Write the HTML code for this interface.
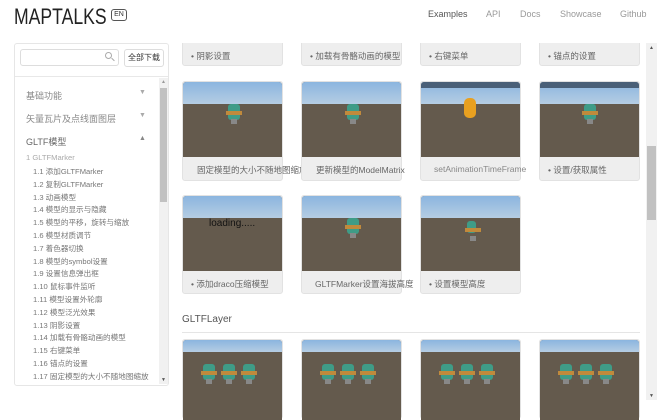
<!DOCTYPE html>
<html><head><meta charset="utf-8"><style>
*{margin:0;padding:0;box-sizing:border-box}
body{width:667px;height:413px;overflow:hidden;background:#fff;font-family:"Liberation Sans","Noto Sans CJK SC",sans-serif;position:relative;color:#555}
.a{position:absolute}
.logo{left:14px;top:4px;font-size:22px;color:#222;transform:scaleX(0.8);transform-origin:0 0}
.en{left:111px;top:9px;width:16px;height:12px;border:1px solid #555;border-radius:3px;font-size:7px;line-height:10px;text-align:center;color:#333}
.nav{top:9px;font-size:9px;color:#999}
.side{left:14px;top:43px;width:155px;height:343px;border:1px solid #e6e6e6;border-radius:3px}
.sec{left:26px;font-size:9px;color:#888}
.arr{left:139px;font-size:7px;color:#aaa}
.it{left:33px;font-size:7.6px;color:#777;white-space:nowrap}
.card{width:101px;background:#eee;border:1px solid #e2e2e2;border-radius:3px}
.img{position:absolute;left:0;top:0;width:100%;background:#645a4d;overflow:hidden;border-radius:3px 3px 0 0}
.sky{position:absolute;left:0;top:0;width:100%;height:22px;background:linear-gradient(#8bb5df,#b5cde3)}
.cap{position:absolute;left:0;font-size:8.5px;color:#666;white-space:nowrap}
.bot{position:absolute;width:12px;height:16px;background:#3f9c87;border-radius:3px}
.bot:after{content:"";position:absolute;left:-2px;top:7px;width:16px;height:4px;background:#c08a3c}
.bot:before{content:"";position:absolute;left:3px;top:15px;width:6px;height:5px;background:#888}
</style></head><body>
<div class="a logo">MAPTALKS</div>
<div class="a en">EN</div>
<div class="a nav" style="left:428px;color:#555">Examples</div>
<div class="a nav" style="left:486px">API</div>
<div class="a nav" style="left:520px">Docs</div>
<div class="a nav" style="left:560px">Showcase</div>
<div class="a nav" style="left:620px">Github</div>

<div class="a side"></div>
<div class="a" style="left:20px;top:49px;width:99px;height:17px;border:1px solid #ddd;border-radius:3px"></div>
<div class="a" style="left:105px;top:52px;width:7px;height:7px;border:1px solid #aaa;border-radius:50%"></div>
<div class="a" style="left:111px;top:59px;width:4px;height:1px;background:#aaa;transform:rotate(45deg)"></div>
<div class="a" style="left:124px;top:49px;width:40px;height:18px;border:1px solid #ddd;border-radius:3px;font-size:8px;line-height:16px;text-align:center;color:#333">全部下载</div>
<div class="a" style="left:15px;top:76px;width:153px;height:1px;background:#e8e8e8"></div>
<div class="a" style="left:159px;top:78px;width:9px;height:306px;background:#f1f1f1"></div>
<div class="a" style="left:160px;top:88px;width:7px;height:114px;background:#c1c1c1"></div>
<div class="a" style="left:161px;top:79px;font-size:5px;color:#999">▲</div>
<div class="a" style="left:161px;top:377px;font-size:5px;color:#555">▼</div>
<div class="a sec" style="top:89px">基础功能</div><div class="a arr" style="top:89px">▼</div>
<div class="a sec" style="top:112px">矢量瓦片及点线面图层</div><div class="a arr" style="top:112px">▼</div>
<div class="a sec" style="top:135px;color:#666">GLTF模型</div><div class="a arr" style="top:135px;color:#888">▲</div>
<div class="a it" style="left:26px;top:153px;color:#aaa">1 GLTFMarker</div>
<div class="a it" style="top:166px">1.1 添加GLTFMarker</div>
<div class="a it" style="top:179px">1.2 复制GLTFMarker</div>
<div class="a it" style="top:192px">1.3 动画模型</div>
<div class="a it" style="top:204px">1.4 模型的显示与隐藏</div>
<div class="a it" style="top:217px">1.5 模型的平移，旋转与缩放</div>
<div class="a it" style="top:230px">1.6 模型材质调节</div>
<div class="a it" style="top:243px">1.7 着色器切换</div>
<div class="a it" style="top:256px">1.8 模型的symbol设置</div>
<div class="a it" style="top:268px">1.9 设置信息弹出框</div>
<div class="a it" style="top:281px">1.10 鼠标事件监听</div>
<div class="a it" style="top:294px">1.11 模型设置外轮廓</div>
<div class="a it" style="top:307px">1.12 模型泛光效果</div>
<div class="a it" style="top:320px">1.13 阴影设置</div>
<div class="a it" style="top:332px">1.14 加载有骨骼动画的模型</div>
<div class="a it" style="top:345px">1.15 右键菜单</div>
<div class="a it" style="top:358px">1.16 锚点的设置</div>
<div class="a it" style="top:371px">1.17 固定模型的大小不随地图缩放</div>

<div class="a" style="left:646px;top:43px;width:11px;height:357px;background:#f1f1f1"></div>
<div class="a" style="left:647px;top:146px;width:9px;height:74px;background:#c1c1c1"></div>
<div class="a" style="left:649px;top:45px;font-size:5px;color:#555">▲</div>
<div class="a" style="left:649px;top:393px;font-size:5px;color:#555">▼</div>

<div class="a card" style="left:182px;top:38px;height:28px"><div class="cap" style="left:8px;top:11px">• 阴影设置</div></div>
<div class="a card" style="left:301px;top:38px;height:28px"><div class="cap" style="left:8px;top:11px">• 加载有骨骼动画的模型</div></div>
<div class="a card" style="left:420px;top:38px;height:28px"><div class="cap" style="left:8px;top:11px">• 右键菜单</div></div>
<div class="a card" style="left:539px;top:38px;height:28px"><div class="cap" style="left:8px;top:11px">• 锚点的设置</div></div>
<div class="a" style="left:175px;top:30px;width:470px;height:13px;background:#fff"></div>

<div class="a card" style="left:182px;top:81px;height:100px"><div class="img" style="height:75px"><div class="sky"></div><div class="bot" style="left:45px;top:22px"></div></div><div class="cap" style="left:14px;top:82px">固定模型的大小不随地图缩放</div></div>
<div class="a card" style="left:301px;top:81px;height:100px"><div class="img" style="height:75px"><div class="sky"></div><div class="bot" style="left:45px;top:22px"></div></div><div class="cap" style="left:14px;top:82px">更新模型的ModelMatrix</div></div>
<div class="a card" style="left:420px;top:81px;height:100px"><div class="img" style="height:75px"><div class="sky"></div><div class="a" style="left:0;top:0;width:100%;height:6px;background:#4a6078"></div><div class="a" style="left:43px;top:16px;width:12px;height:20px;background:#e8a020;border-radius:5px"></div></div><div class="cap" style="left:13px;top:82px;color:#888">setAnimationTimeFrame</div></div>
<div class="a card" style="left:539px;top:81px;height:100px"><div class="img" style="height:75px"><div class="sky"></div><div class="a" style="left:0;top:0;width:100%;height:6px;background:#4a6078"></div><div class="bot" style="left:44px;top:22px"></div></div><div class="cap" style="left:8px;top:82px">• 设置/获取属性</div></div>

<div class="a card" style="left:182px;top:195px;height:99px"><div class="img" style="height:75px"><div class="sky"></div><div class="a" style="left:26px;top:22px;font-size:10px;color:#111">loading.....</div></div><div class="cap" style="left:8px;top:82px">• 添加draco压缩模型</div></div>
<div class="a card" style="left:301px;top:195px;height:99px"><div class="img" style="height:75px"><div class="sky"></div><div class="bot" style="left:45px;top:22px"></div></div><div class="cap" style="left:13px;top:82px">GLTFMarker设置海拔高度</div></div>
<div class="a card" style="left:420px;top:195px;height:99px"><div class="img" style="height:75px"><div class="sky"></div><div class="bot" style="left:46px;top:25px;width:9px;height:12px"></div></div><div class="cap" style="left:8px;top:82px">• 设置模型高度</div></div>

<div class="a" style="left:182px;top:314px;font-size:10px;color:#555">GLTFLayer</div>
<div class="a" style="left:182px;top:332px;width:458px;height:1px;background:#e5e5e5"></div>

<div class="a card" style="left:182px;top:339px;height:80px"><div class="img" style="height:80px"><div class="sky" style="height:12px"></div><div class="bot" style="left:20px;top:24px"></div><div class="bot" style="left:40px;top:24px"></div><div class="bot" style="left:60px;top:24px"></div></div></div>
<div class="a card" style="left:301px;top:339px;height:80px"><div class="img" style="height:80px"><div class="sky" style="height:12px"></div><div class="bot" style="left:20px;top:24px"></div><div class="bot" style="left:40px;top:24px"></div><div class="bot" style="left:60px;top:24px"></div></div></div>
<div class="a card" style="left:420px;top:339px;height:80px"><div class="img" style="height:80px"><div class="sky" style="height:12px"></div><div class="bot" style="left:20px;top:24px"></div><div class="bot" style="left:40px;top:24px"></div><div class="bot" style="left:60px;top:24px"></div></div></div>
<div class="a card" style="left:539px;top:339px;height:80px"><div class="img" style="height:80px"><div class="sky" style="height:12px"></div><div class="bot" style="left:20px;top:24px"></div><div class="bot" style="left:40px;top:24px"></div><div class="bot" style="left:60px;top:24px"></div></div></div>
</body></html>
